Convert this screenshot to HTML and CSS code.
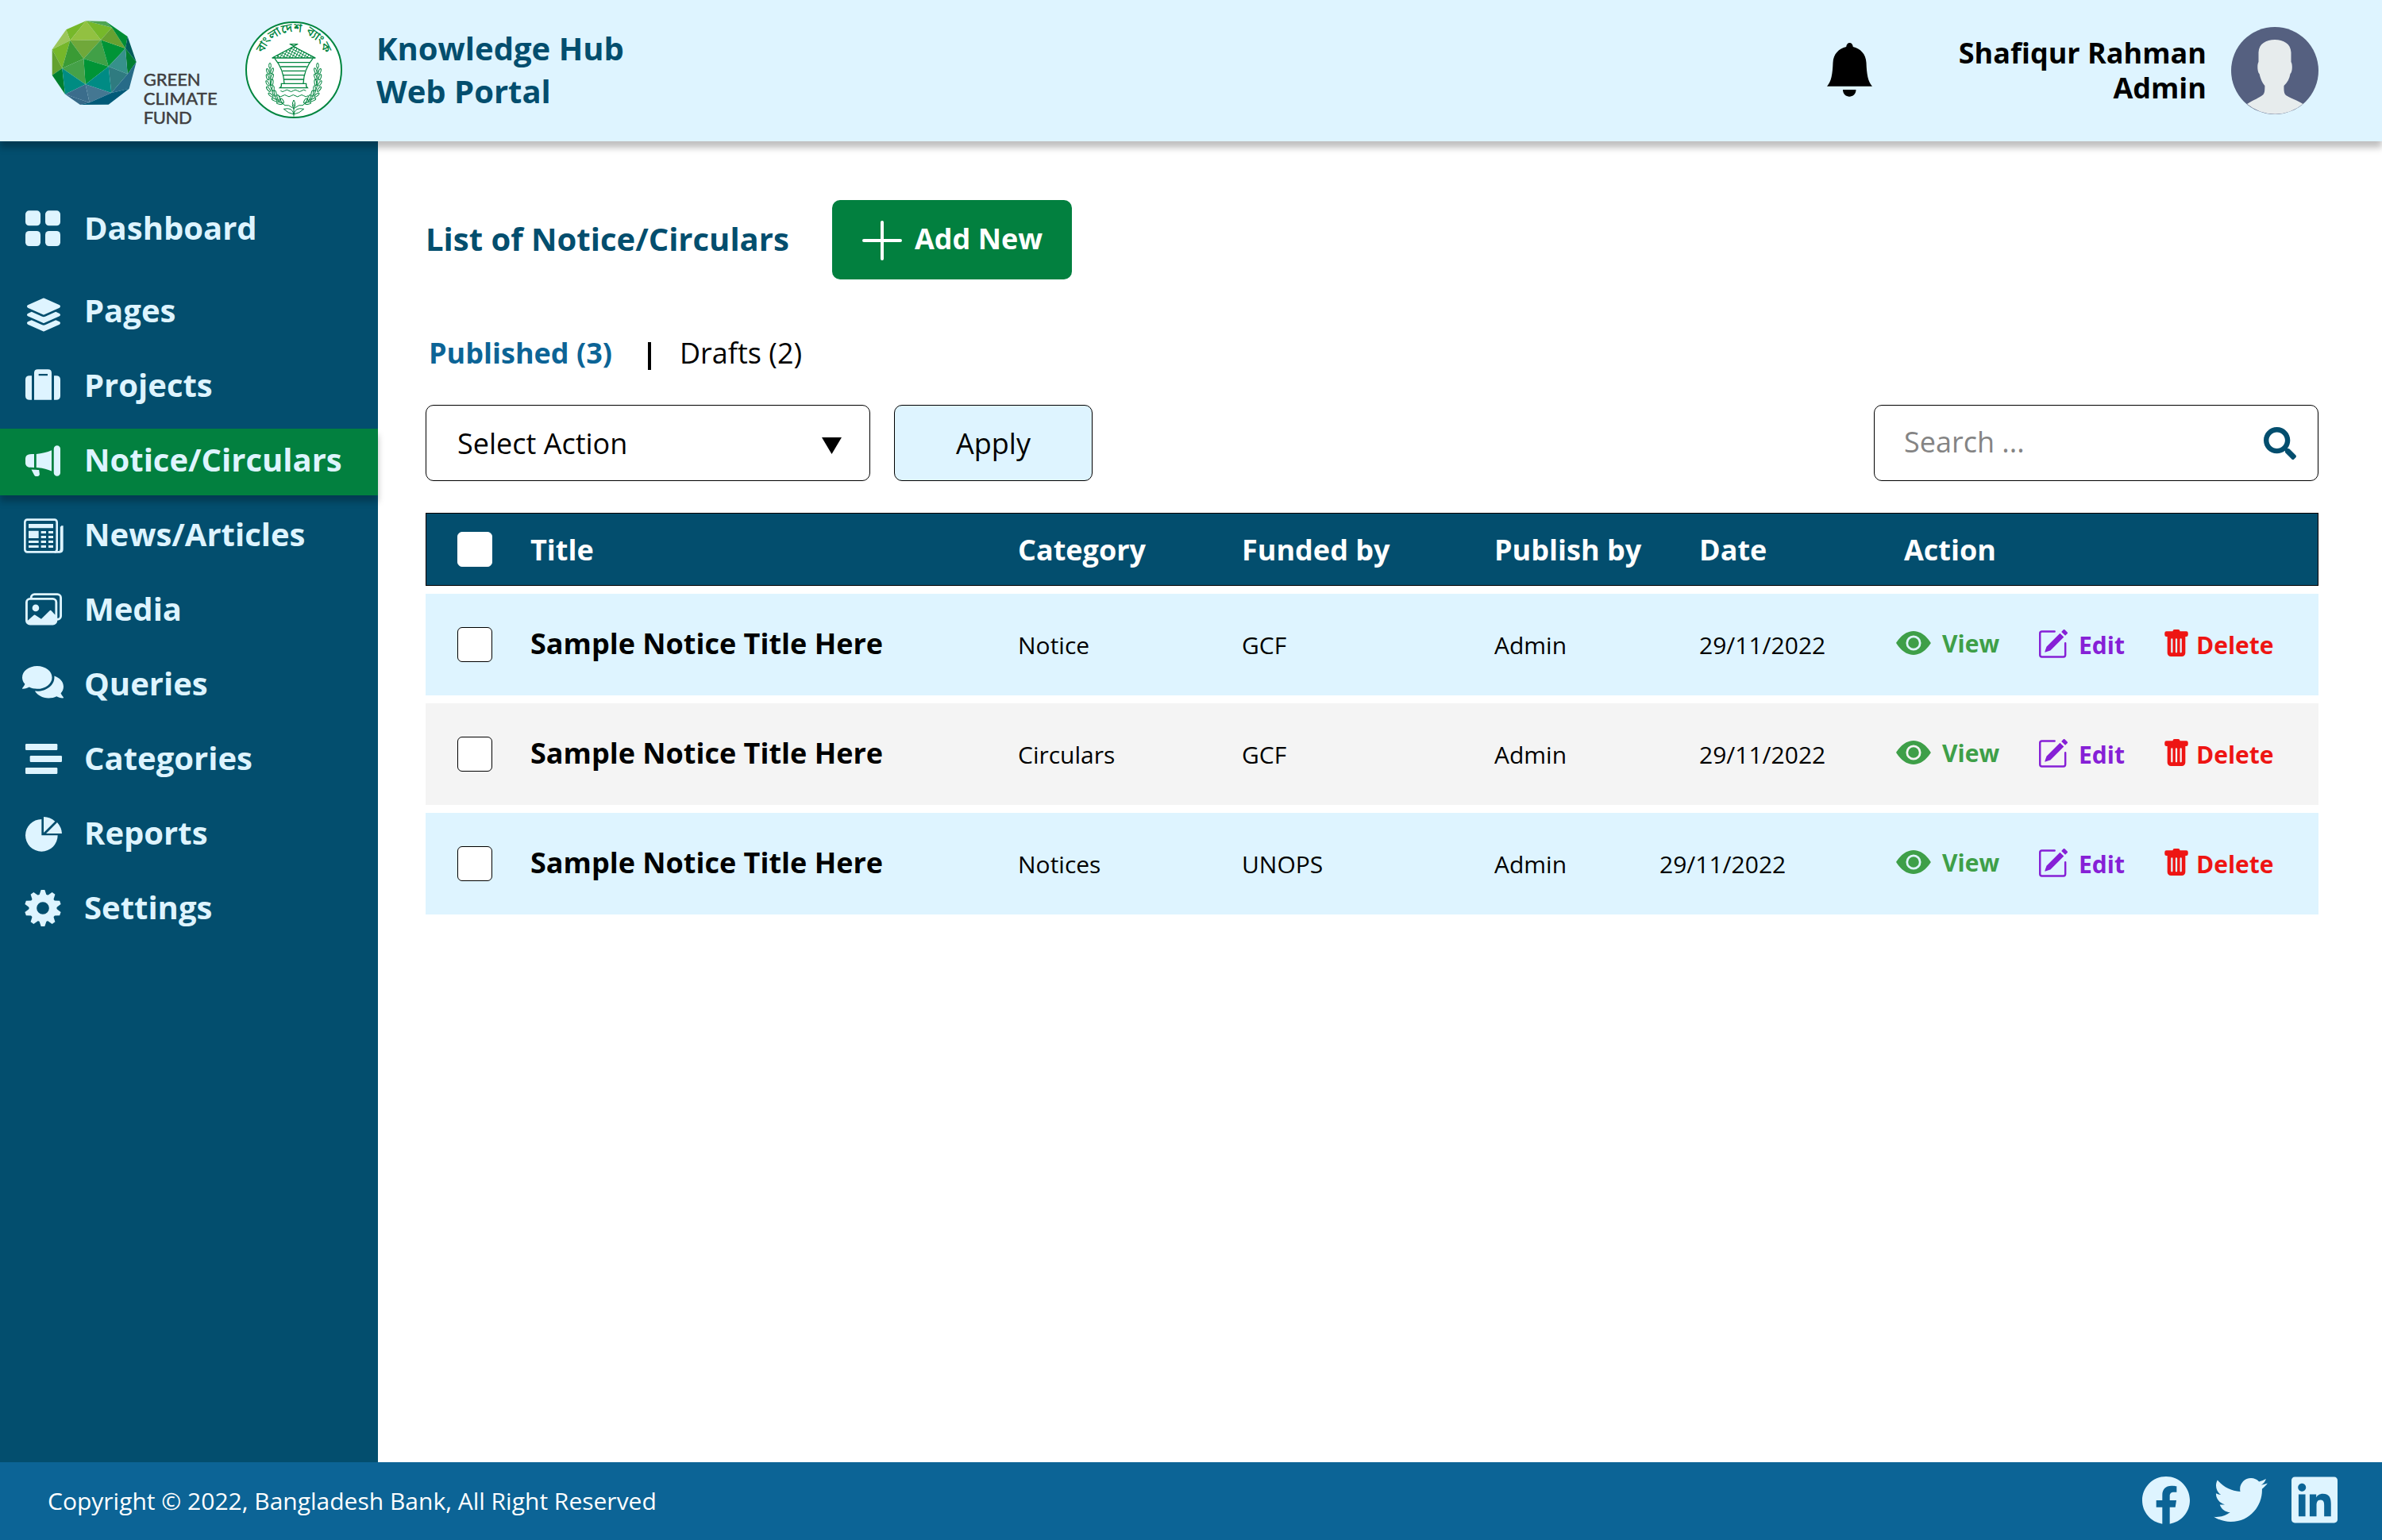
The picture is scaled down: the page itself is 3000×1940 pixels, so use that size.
FILE: index.html
```html
<!DOCTYPE html>
<html lang="en">
<head>
<meta charset="utf-8">
<title>Knowledge Hub Web Portal</title>
<link rel="stylesheet" href="styles.css">
</head>
<body>
<svg class="defs" width="0" height="0" aria-hidden="true">
  <symbol id="i-eye" viewBox="0 2.5 16 11"><path d="M10.5 8a2.5 2.5 0 1 1-5 0 2.5 2.5 0 0 1 5 0z"/><path d="M0 8s3-5.5 8-5.5S16 8 16 8s-3 5.5-8 5.5S0 8 0 8zm8 3.5a3.5 3.5 0 1 0 0-7 3.5 3.5 0 0 0 0 7z"/></symbol>
  <symbol id="i-edit" viewBox="1 .5 14.65 14.65"><path d="M15.502 1.94a.5.5 0 0 1 0 .706L14.459 3.69l-2-2L13.502.646a.5.5 0 0 1 .707 0l1.293 1.293zm-1.75 2.456-2-2L4.939 9.21a.5.5 0 0 0-.121.196l-.805 2.414a.25.25 0 0 0 .316.316l2.414-.805a.5.5 0 0 0 .196-.12l6.813-6.814z"/><path d="M1 13.5A1.5 1.5 0 0 0 2.5 15h11a1.5 1.5 0 0 0 1.5-1.5v-6a.5.5 0 0 0-1 0v6a.5.5 0 0 1-.5.5h-11a.5.5 0 0 1-.5-.5v-11a.5.5 0 0 1 .5-.5H9a.5.5 0 0 0 0-1H2.500A1.5 1.5 0 0 0 1 2.5v11z"/></symbol>
  <symbol id="i-trash" viewBox="1.5 0 13 15"><path d="M2.5 1a1 1 0 0 0-1 1v1a1 1 0 0 0 1 1H3v9a2 2 0 0 0 2 2h6a2 2 0 0 0 2-2V4h.5a1 1 0 0 0 1-1V2a1 1 0 0 0-1-1H10a1 1 0 0 0-1-1H7a1 1 0 0 0-1 1H2.500zm3 4a.5.5 0 0 1 .5.5v7a.5.5 0 0 1-1 0v-7a.5.5 0 0 1 .5-.5zM8 5a.5.5 0 0 1 .5.5v7a.5.5 0 0 1-1 0v-7A.5.5 0 0 1 8 5zm3 .5v7a.5.5 0 0 1-1 0v-7a.5.5 0 0 1 1 0z"/></symbol>
</svg>

<header class="topbar">
  <svg class="gcf" viewBox="75 77 630 408" role="img" aria-label="Green Climate Fund">
    <g stroke-width="1" stroke-linejoin="round">
      <path fill="#76b82a" d="M130 111 205 78 145 152z"/>
      <path fill="#9cc65a" d="M130 111 77 186 145 152z"/>
      <path fill="#76b72a" d="M77 186 145 152 115 257z"/>
      <path fill="#64a12f" d="M77 186 115 257 77 283z"/>
      <path fill="#00802f" d="M77 283 115 257 126 355z"/>
      <path fill="#92c141" d="M205 78 145 152 261 150z"/>
      <path fill="#76b82a" d="M205 78 261 150 303 103z"/>
      <path fill="#4fa552" d="M205 78 280 80 303 103z"/>
      <path fill="#70a83a" d="M145 152 261 150 196 221z"/>
      <path fill="#3a9b35" d="M145 152 196 221 115 257z"/>
      <path fill="#41a047" d="M261 150 196 221 290 250z"/>
      <path fill="#009436" d="M261 150 354 182 290 250z"/>
      <path fill="#68a131" d="M261 150 303 103 354 182z"/>
      <path fill="#008c33" d="M280 80 362 137 354 182 303 103z"/>
      <path fill="#005b5a" d="M362 137 395 233 354 182z"/>
      <path fill="#007d30" d="M354 182 395 233 362 279z"/>
      <path fill="#36918b" d="M354 182 362 279 290 250z"/>
      <path fill="#2f7b80" d="M290 250 362 279 301 350z"/>
      <path fill="#276b88" d="M395 233 368 334 301 350 362 279z"/>
      <path fill="#009436" d="M196 221 290 250 203 318z"/>
      <path fill="#45a148" d="M196 221 203 318 115 257z"/>
      <path fill="#008c82" d="M115 257 203 318 126 355z"/>
      <path fill="#008b84" d="M290 250 301 350 203 318z"/>
      <path fill="#3b6d8c" d="M203 318 126 355 218 387z"/>
      <path fill="#447792" d="M203 318 301 350 218 387z"/>
      <path fill="#356988" d="M126 355 218 387 183 395z"/>
      <path fill="#005a78" d="M218 387 301 350 368 334 290 394 183 395z"/>
    </g>
    <g class="gcf-name">
      <text x="422" y="323" textLength="216">GREEN</text>
      <text x="422" y="396" textLength="279">CLIMATE</text>
      <text x="422" y="467" textLength="183">FUND</text>
    </g>
  </svg>

  <svg class="emblem" viewBox="807 81 366 366" role="img" aria-label="Bangladesh Bank">
    <defs>
      <path id="arc" d="M869 227A122 122 0 0 1 1111 227"/>
      <pattern id="thatch" width="10" height="10" patternUnits="userSpaceOnUse" patternTransform="rotate(28)"><path d="M0 0H10M0 0V10" stroke="#00853f" stroke-width="5"/></pattern>
      <g id="branch" fill="none" stroke="#00853f" stroke-width="3">
        <path d="M900 246V290Q896 370 955 396"/>
        <g fill="#fff">
          <ellipse cx="900" cy="248" rx="4" ry="10"/>
          <ellipse cx="892" cy="270" rx="4" ry="11" transform="rotate(-18 892 270)"/><ellipse cx="908" cy="268" rx="4" ry="11" transform="rotate(18 908 268)"/>
          <ellipse cx="891" cy="292" rx="4" ry="11" transform="rotate(-18 891 292)"/><ellipse cx="908" cy="290" rx="4" ry="11" transform="rotate(18 908 290)"/>
          <ellipse cx="891" cy="315" rx="4" ry="11" transform="rotate(-28 891 315)"/><ellipse cx="908" cy="312" rx="4" ry="11" transform="rotate(8 908 312)"/>
          <ellipse cx="894" cy="337" rx="4" ry="11" transform="rotate(-38 894 337)"/><ellipse cx="912" cy="334" rx="4" ry="11"/>
          <ellipse cx="903" cy="359" rx="4" ry="11" transform="rotate(-50 903 359)"/><ellipse cx="920" cy="353" rx="4" ry="11" transform="rotate(-10 920 353)"/>
          <ellipse cx="917" cy="377" rx="4" ry="11" transform="rotate(-65 917 377)"/><ellipse cx="932" cy="369" rx="4" ry="11" transform="rotate(-20 932 369)"/>
          <ellipse cx="936" cy="390" rx="4" ry="11" transform="rotate(-80 936 390)"/><ellipse cx="946" cy="381" rx="4" ry="10" transform="rotate(-30 946 381)"/>
        </g>
      </g>
    </defs>
    <circle cx="990" cy="264" r="180" fill="#fff" stroke="#00853f" stroke-width="6"/>
    <text class="emblem-name"><textPath href="#arc" startOffset="50%" text-anchor="middle">বাংলাদেশ ব্যাংক</textPath></text>
    <g fill="none" stroke="#00853f" stroke-width="4">
      <path d="M974 167H1006M978 168 1000 180M1002 168 980 180"/>
      <path fill="url(#thatch)" d="M990 176 908 219H1072z"/>
      <path d="M918 221Q952 262 954 316M1062 221Q1028 262 1026 316"/>
      <path d="M930 236H1050M940 252H1040M947 268H1033M951 284H1029M953 300H1027"/>
      <path d="M943 316H1037V326L1042 332H937L943 326z"/>
      <path stroke-width="3" d="M940 343q8 7 16 0t16 0 16 0 16 0 16 0 16 0M932 362q8 7 16 0t16 0 16 0 16 0 16 0 16 0 16 0"/>
      <path stroke-width="3" d="M990 440V392M990 378Q980 394 990 412Q1000 394 990 378M990 432Q985 404 952 412Q968 428 990 432M990 432Q995 404 1028 412Q1012 428 990 432M986 408Q972 394 954 398M994 408Q1008 394 1026 398"/>
    </g>
    <use href="#branch"/>
    <use href="#branch" transform="translate(1980 0) scale(-1 1)"/>
  </svg>

  <h1 class="portal-name">Knowledge Hub<br>Web Portal</h1>

  <svg class="bell" viewBox="0 0 57 68" aria-hidden="true"><path d="M28.500 0c2.600 0 4 2 4.300 5C42 7 49 14 49.500 25 50 39 51.500 49 57 54.700H0C5.500 49 7 39 7.500 25 8 14 15 7 24.200 5 24.500 2 26 0 28.500 0zM20 59h16.500C36.500 70.500 20 70.500 20 59z"/></svg>
  <p class="user-name">Shafiqur Rahman<br>Admin</p>
  <svg class="avatar" viewBox="0 0 110 110" aria-hidden="true">
    <circle cx="55" cy="55" r="55" fill="#556080"/>
    <path fill="#e7eced" d="M20 97C28 92 36 89 40 85.500 42 83.500 42.400 81 42.400 74 38.500 69 37 65 35.600 59 33 57 32.500 47 34.500 44V32C35 21 44 16 55 16S75 21 75.500 32V44C77.600 47 77.200 57 74.500 59 73.500 65 71 70 66.500 74 66.300 80 66.500 84 69 86 74 89.500 83 92 90.500 97A55 55 0 0 1 20 97z"/>
  </svg>
</header>

<div class="page">
  <nav class="sidebar">
    <a class="nav-item nav-home"><svg viewBox="84 54 156 252"><rect x="96" y="106" width="57" height="57" rx="14"/><rect x="171" y="106" width="57" height="57" rx="14"/><rect x="96" y="183" width="57" height="57" rx="14"/><rect x="171" y="183" width="57" height="57" rx="14"/></svg><span>Dashboard</span></a>
    <a class="nav-item"><svg viewBox="84 366 156 252"><path transform="translate(102 436.500) scale(.2461)" d="M12.410 148.020l232.940 105.670c6.800 3.090 14.490 3.090 21.290 0l232.940-105.670c16.550-7.510 16.550-32.520 0-40.030L266.650 2.310a25.607 25.607 0 0 0-21.290 0L12.410 107.980c-16.550 7.510-16.550 32.530 0 40.040zm487.180 88.280l-58.090-26.330-161.640 73.270c-7.560 3.430-15.590 5.170-23.860 5.170s-16.290-1.740-23.860-5.170L70.510 209.970l-58.100 26.330c-16.550 7.500-16.550 32.500 0 40l232.940 105.590c6.800 3.080 14.490 3.080 21.290 0L499.590 276.300c16.550-7.500 16.550-32.500 0-40zm0 127.800l-57.870-26.230-161.860 73.370c-7.560 3.430-15.590 5.170-23.860 5.170s-16.290-1.740-23.860-5.170L70.290 337.870 12.410 364.100c-16.550 7.500-16.550 32.500 0 40l232.940 105.590c6.800 3.080 14.490 3.080 21.290 0L499.590 404.100c16.550-7.500 16.550-32.500 0-40z"/></svg><span>Pages</span></a>
    <a class="nav-item"><svg viewBox="84 648 156 252"><path fill-rule="evenodd" d="M120 730V821H112Q96 821 96 806V745Q96 730 112 730zM204 730V821H212Q228 821 228 806V745Q228 730 212 730zM129 821V719Q129 706 143 706H181Q195 706 195 719V821zM146 723V730H180V723z"/></svg><span>Projects</span></a>
    <a class="nav-item active"><svg viewBox="84 930 156 252"><path transform="translate(96 985.500) scale(8.25)" d="M13 2.500a1.500 1.500 0 0 1 3 0v11a1.500 1.500 0 0 1-3 0v-11zm-1 .724c-2.067.95-4.539 1.481-7 1.656v6.237a25.222 25.222 0 0 1 1.088.085c2.053.204 4.038.668 5.912 1.560V3.224zm-8 7.841V4.934c-.68.027-1.399.043-2.008.053A2.020 2.020 0 0 0 0 7v2c0 1.106.896 1.996 1.994 2.009a68.140 68.140 0 0 1 .496.008 64 64 0 0 1 1.510.048zm1.390 1.081c.285.021.569.047.85.078l.253 1.690a1 1 0 0 1-.983 1.187h-.548a1 1 0 0 1-.916-.599l-1.314-2.480a65.810 65.810 0 0 1 1.692.064c.327.017.65.037.966.06z"/></svg><span>Notice/Circulars</span></a>
    <a class="nav-item"><svg viewBox="84 1212 156 252"><g fill="none" stroke="currentColor" stroke-width="8"><rect x="94" y="1274" width="121" height="122" rx="9"/><path d="M206 1396H225Q235 1396 235 1386V1297" /><path stroke-width="5" d="M226 1392Q230 1390 230 1384V1300"/></g><path d="M108 1290H201V1306H108zM108 1316H146V1344H108zM108 1353H146V1362H108zM108 1371H146V1380H108zM155 1317H174V1326H155zM155 1335H174V1344H155zM155 1353H174V1362H155zM155 1371H174V1380H155zM183 1317H201V1326H183zM183 1335H201V1344H183zM183 1353H201V1362H183zM183 1371H201V1380H183z"/></svg><span>News/Articles</span></a>
    <a class="nav-item"><svg viewBox="84 84 156 252"><g transform="translate(96 133) scale(8.625)"><path d="M4.502 9a1.500 1.500 0 1 0 0-3 1.500 1.500 0 0 0 0 3z"/><path d="M14.002 13a2 2 0 0 1-2 2h-10a2 2 0 0 1-2-2V5A2 2 0 0 1 2 3a2 2 0 0 1 2-2h10a2 2 0 0 1 2 2v8a2 2 0 0 1-1.998 2zM14 2H4a1 1 0 0 0-1 1h9.002a2 2 0 0 1 2 2v7A1 1 0 0 0 15 11V3a1 1 0 0 0-1-1zM2.002 4a1 1 0 0 0-1 1v8l2.646-2.354a.5.5 0 0 1 .63-.062l2.660 1.773 3.710-3.710a.5.5 0 0 1 .577-.094l1.777 1.947V5a1 1 0 0 0-1-1h-10z"/></g></svg><span>Media</span></a>
    <a class="nav-item"><svg viewBox="84 366 156 252"><path transform="translate(84 408.300) scale(.2708)" d="M416 192c0-88.400-93.100-160-208-160S0 103.600 0 192c0 34.300 14.100 65.900 38 92-13.400 30.200-35.500 54.200-35.800 54.500-2.200 2.300-2.800 5.700-1.500 8.700S4.800 352 8 352c36.600 0 66.900-12.300 88.700-25 32.200 15.700 70.300 25 111.300 25 114.900 0 208-71.600 208-160zm122 220c23.900-26 38-57.700 38-92 0-66.900-53.500-124.200-129.300-148.100.9 6.600 1.300 13.300 1.300 20.100 0 105.900-107.700 192-240 192-10.800 0-21.300-.8-31.700-1.900C207.800 439.600 281.800 480 368 480c41 0 79.100-9.200 111.300-25 21.800 12.700 52.100 25 88.700 25 3.200 0 6.100-1.900 7.300-4.800 1.300-2.900.7-6.300-1.500-8.700-.3-.3-22.400-24.200-35.800-54.500z"/></svg><span>Queries</span></a>
    <a class="nav-item"><svg viewBox="84 648 156 252"><rect x="96" y="711" width="121" height="24" rx="4"/><rect x="113" y="756" width="121" height="24" rx="4"/><rect x="96" y="801" width="121" height="24" rx="4"/></svg><span>Categories</span></a>
    <a class="nav-item"><svg viewBox="84 930 156 252"><path d="M157 996V1057H218A61 61 0 1 1 157 996zM165 987Q190 988 208 1004L165 1047zM216 1008Q233 1027 234 1050H174z"/></svg><span>Reports</span></a>
    <a class="nav-item"><svg viewBox="84 1212 156 252"><circle cx="162" cy="1332" r="38" fill="none" stroke="currentColor" stroke-width="29"/><g id="teeth"><path id="tooth" d="M148 1284 155 1263H169L176 1284z"/><use href="#tooth" transform="rotate(36 162 1332)"/><use href="#tooth" transform="rotate(72 162 1332)"/><use href="#tooth" transform="rotate(108 162 1332)"/><use href="#tooth" transform="rotate(144 162 1332)"/></g><use href="#teeth" transform="rotate(180 162 1332)"/></svg><span>Settings</span></a>
  </nav>

  <main class="content">
    <div class="title-row">
      <h2>List of Notice/Circulars</h2>
      <button class="add-new"><svg width="50" height="50" viewBox="0 0 50 50"><path d="M25 2V48M2 25H48" stroke="#fff" stroke-width="4" stroke-linecap="round"/></svg><span>Add New</span></button>
    </div>
    <div class="tabs"><a class="tab-current">Published (3)</a><i class="divider"></i><a>Drafts (2)</a></div>
    <div class="controls">
      <div class="select"><span>Select Action</span><svg width="25" height="21" viewBox="0 0 25 21"><path d="M0 0H25L12.500 21z"/></svg></div>
      <button class="apply">Apply</button>
      <div class="search"><span>Search ...</span><svg width="41" height="41" viewBox="0 0 512 512"><path d="M505 442.700L405.300 343c-4.500-4.500-10.600-7-17-7H372c27.600-35.300 44-79.700 44-128C416 93.100 322.900 0 208 0S0 93.100 0 208s93.100 208 208 208c48.300 0 92.700-16.400 128-44v16.300c0 6.400 2.500 12.500 7 17l99.700 99.700c9.400 9.400 24.600 9.400 33.900 0l28.300-28.300c9.400-9.400 9.400-24.600.1-34zM208 336c-70.700 0-128-57.200-128-128 0-70.700 57.200-128 128-128 70.700 0 128 57.200 128 128 0 70.700-57.200 128-128 128z"/></svg></div>
    </div>

    <div class="table">
      <div class="row head"><i class="check"></i><span>Title</span><span>Category</span><span>Funded by</span><span>Publish by</span><span>Date</span><span class="action-head">Action</span></div>
      <div class="row"><i class="check"></i><b>Sample Notice Title Here</b><span>Notice</span><span>GCF</span><span>Admin</span><span>29/11/2022</span>
        <div class="actions"><a class="view"><svg><use href="#i-eye"/></svg>View</a><a class="edit"><svg><use href="#i-edit"/></svg>Edit</a><a class="delete"><svg><use href="#i-trash"/></svg>Delete</a></div></div>
      <div class="row alt"><i class="check"></i><b>Sample Notice Title Here</b><span>Circulars</span><span>GCF</span><span>Admin</span><span>29/11/2022</span>
        <div class="actions"><a class="view"><svg><use href="#i-eye"/></svg>View</a><a class="edit"><svg><use href="#i-edit"/></svg>Edit</a><a class="delete"><svg><use href="#i-trash"/></svg>Delete</a></div></div>
      <div class="row"><i class="check"></i><b>Sample Notice Title Here</b><span>Notices</span><span>UNOPS</span><span>Admin</span><span class="date-early">29/11/2022</span>
        <div class="actions"><a class="view"><svg><use href="#i-eye"/></svg>View</a><a class="edit"><svg><use href="#i-edit"/></svg>Edit</a><a class="delete"><svg><use href="#i-trash"/></svg>Delete</a></div></div>
    </div>
  </main>
</div>

<footer class="footer">
  <p>Copyright © 2022, Bangladesh Bank, All Right Reserved</p>
  <svg class="facebook" viewBox="8 8 496 496"><path d="M504 256C504 119 393 8 256 8S8 119 8 256c0 123.780 90.690 226.380 209.250 245V327.690h-63V256h63v-54.640c0-62.150 37-96.480 93.670-96.480 27.140 0 55.520 4.840 55.520 4.840v61h-31.280c-30.800 0-40.410 19.120-40.410 38.730V256h68.780l-11 71.690h-57.780V501C413.310 482.380 504 379.780 504 256z"/></svg>
  <svg class="twitter" viewBox="0 48 512 416"><path d="M459.370 151.716c.325 4.548.325 9.097.325 13.645 0 138.720-105.583 298.558-298.558 298.558-59.452 0-114.680-17.219-161.137-47.106 8.447.974 16.568 1.299 25.340 1.299 49.055 0 94.213-16.568 130.274-44.832-46.132-.975-84.792-31.188-98.112-72.772 6.498.974 12.995 1.624 19.818 1.624 9.421 0 18.843-1.300 27.614-3.573-48.081-9.747-84.143-51.980-84.143-102.985v-1.299c13.969 7.797 30.214 12.670 47.431 13.319-28.264-18.843-46.781-51.005-46.781-87.391 0-19.492 5.197-37.360 14.294-52.954 51.655 63.675 129.300 105.258 216.365 109.807-1.624-7.797-2.599-15.918-2.599-24.040 0-57.828 46.782-104.934 104.934-104.934 30.213 0 57.502 12.670 76.670 33.137 23.715-4.548 46.456-13.320 66.599-25.340-7.798 24.366-24.366 44.833-46.132 57.827 21.117-2.273 41.584-8.122 60.426-16.243-14.292 20.791-32.161 39.308-52.628 54.253z"/></svg>
  <svg class="linkedin" viewBox="0 32 448 448"><path d="M416 32H31.900C14.300 32 0 46.500 0 64.300v383.400C0 465.500 14.300 480 31.900 480H416c17.600 0 32-14.500 32-32.300V64.300c0-17.800-14.400-32.300-32-32.300zM135.400 416H69V202.200h66.500V416zm-33.200-243c-21.300 0-38.500-17.300-38.500-38.500S80.900 96 102.200 96c21.200 0 38.500 17.300 38.500 38.500 0 21.300-17.200 38.500-38.500 38.500zm282.100 243h-66.400V312c0-24.800-.5-56.700-34.500-56.700-34.600 0-39.900 27-39.900 54.900V416h-66.400V202.200h63.700v29.200h.9c8.900-16.800 30.600-34.500 62.900-34.500 67.200 0 79.700 44.300 79.700 101.900V416z"/></svg>
</footer>
</body>
</html>
```
FILE: styles.css
```css
* { box-sizing: border-box; margin: 0; padding: 0; }

body {
  display: flex;
  flex-direction: column;
  width: 3000px;
  height: 1940px;
  overflow: hidden;
  background: #fff;
  color: #000;
  font-family: "Open Sans", "Noto Sans", sans-serif;
  font-size: 36px;
  line-height: 49px;
}

.defs { display: none; }
svg { display: block; flex: none; fill: currentColor; }
button { border: 0; font: inherit; color: inherit; }

/* Top bar */
.topbar {
  position: relative;
  z-index: 1;
  display: flex;
  align-items: flex-start;
  flex: none;
  height: 178px;
  padding-left: 65px;
  background: #def4ff;
  box-shadow: 0 8px 8px rgba(0, 0, 0, .25);
}
.gcf { width: 210px; height: 136px; margin-top: 25.700px; overflow: visible; }
.gcf-name { fill: #3f3e40; stroke: #3f3e40; stroke-width: 1.500px; font: 400 66px Lato, sans-serif; }
.emblem { width: 122px; height: 122px; margin: 27px 0 0 34px; overflow: visible; }
.emblem-name { fill: #00853f; font: 500 46px "Noto Sans Bengali", "Open Sans", sans-serif; }
.portal-name {
  margin: 34px 0 0 43px;
  color: #034e6e;
  font-size: 40px;
  font-weight: 700;
  line-height: 54px;
}
.bell { width: 57px; height: 68px; margin: 54px 0 0 auto; }
.user-name {
  width: 421px;
  margin-top: 45px;
  font-weight: 700;
  line-height: 44px;
  text-align: right;
}
.avatar { width: 110px; height: 110px; margin: 34px 80px 0 31px; }

/* Body */
.page { display: flex; flex: 1; }
.sidebar {
  display: flex;
  flex-direction: column;
  gap: 10px;
  flex: none;
  width: 476px;
  padding-top: 70px;
  background: #034e6e;
  color: #def4ff;
}
.nav-item {
  display: flex;
  align-items: center;
  gap: 26px;
  height: 84px;
  padding-left: 28px;
  font-size: 40px;
  font-weight: 700;
  line-height: 55px;
}
.nav-item svg { width: 52px; height: 84px; }
.nav-item span { padding-bottom: 7px; }
.nav-home { margin-bottom: 10px; }
.active { background: #02803f; box-shadow: 0 8px 8px rgba(0, 0, 0, .25); }

.content { flex: 1; padding: 74px 80px 0 60px; }
.title-row { display: flex; align-items: center; height: 100px; }
.title-row h2 {
  width: 512px;
  padding-bottom: 3px;
  color: #034e6e;
  font-size: 40px;
  line-height: 55px;
  white-space: nowrap;
}
.add-new {
  display: flex;
  align-items: center;
  gap: 16px;
  width: 302px;
  height: 100px;
  padding: 2px 0 0 38px;
  border-radius: 10px;
  background: #02803f;
  color: #fff;
  font-weight: 700;
}
.add-new span { padding-bottom: 6px; }

.tabs { display: flex; align-items: center; height: 49px; margin-top: 68px; }
.tab-current { width: 280px; padding-left: 4px; color: #0c6496; font-weight: 700; }
.divider { width: 4px; height: 35px; margin: 7px 36px 0 0; background: #000; }

.controls { display: flex; height: 96px; margin-top: 41px; }
.select, .search {
  display: flex;
  align-items: center;
  justify-content: space-between;
  width: 560px;
  border: 1px solid #000;
  border-radius: 10px;
}
.select { padding: 0 35px 0 39px; }
.select svg { margin-top: 7px; }
.apply {
  width: 250px;
  margin-left: 30px;
  border: 1px solid #000;
  border-radius: 10px;
  background: #def4ff;
}
.search { margin-left: auto; padding: 0 27px 0 37px; color: #034e6e; }
.search span { padding-bottom: 4px; color: #848484; }

/* Table */
.table { display: grid; gap: 10px; margin-top: 40px; }
.row {
  display: grid;
  grid-template-columns: 92px 614px 282px 318px 258px 248px 1fr;
  align-items: center;
  height: 128px;
  padding-left: 40px;
  background: #def4ff;
  font-size: 30px;
  line-height: 41px;
}
.row b { padding-bottom: 4px; font-size: 36px; line-height: 49px; }
.alt { background: #f4f4f4; }
.head {
  height: 92px;
  padding-left: 39px;
  border: 1px solid #000;
  background: #034e6e;
  color: #fff;
  font-size: 36px;
  font-weight: 700;
  line-height: 49px;
}
.check { width: 44px; height: 44px; border: 1px solid #000; border-radius: 6px; background: #fff; }
.head .check { border-color: #fff; }
.action-head { padding-left: 10px; }
.date-early { margin-left: -50px; }

.actions { display: grid; grid-template-columns: 180px 158px 1fr; align-items: center; font-weight: 700; }
.actions a { display: flex; align-items: center; gap: 14px; }
.actions .view { padding-bottom: 4px; color: #3e9f48; }
.view svg { width: 44px; height: 30px; }
.edit { color: #8620d6; }
.edit svg { width: 36px; height: 36px; margin-bottom: 2px; }
.actions .delete { gap: 10px; color: #ee1513; }
.delete svg { width: 30px; height: 34px; margin-bottom: 4px; }

/* Footer */
.footer {
  display: flex;
  align-items: flex-start;
  flex: none;
  height: 98px;
  padding: 18px 56px 0 60px;
  background: #0c6496;
  color: #def4ff;
}
.footer p { margin: 10px auto 0 0; color: #fff; font-size: 30px; line-height: 41px; }
.facebook { width: 60px; height: 60px; }
.twitter { width: 68px; height: 55px; margin: 2px 30px 0; }
.linkedin { width: 58px; height: 59px; }
```
